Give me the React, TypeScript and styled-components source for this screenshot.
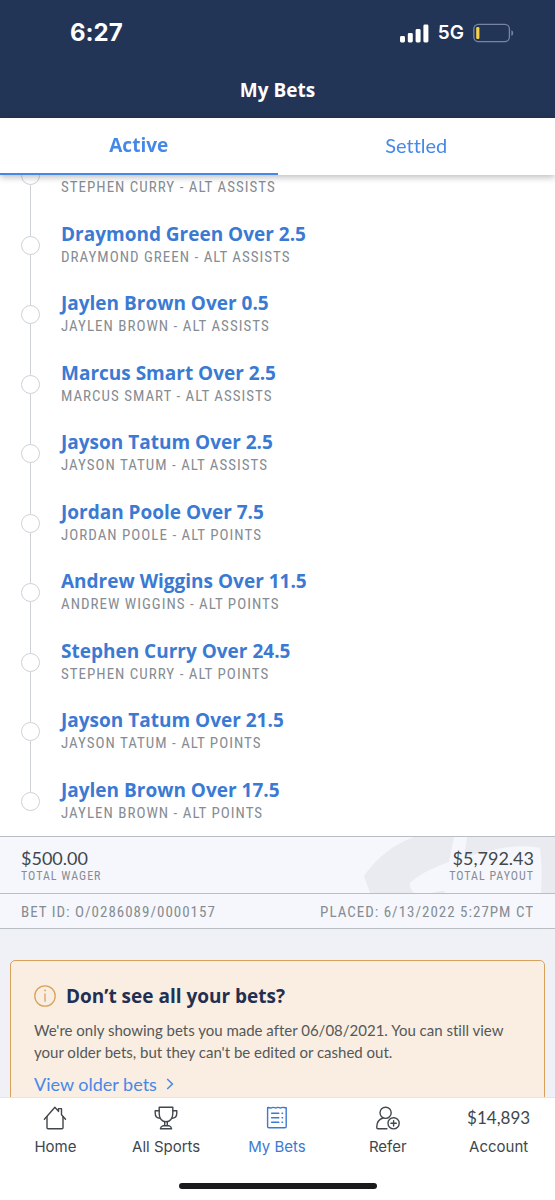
import React, { useLayoutEffect, useRef } from "react";
import styled, { createGlobalStyle } from "styled-components";

const sans = '"Lato", "Open Sans", sans-serif';
const heading = '"Open Sans", "Lato", sans-serif';
const narrow = '"Roboto Condensed", "Roboto", sans-serif';
const system = '"Inter", "Roboto", sans-serif';

const color = {
  navy: "#233556",
  blue: "#3b7ad3",
  bright: "#4688e8",
  ink: "#41474d",
  muted: "#868c93",
  line: "#ced2d6",
  rule: "#b9bec4",
  panel: "#f5f7fc",
  page: "#eff1f7",
  amber: "#d9a25c",
  cream: "#f9eee1",
};

const GlobalStyle = createGlobalStyle`
  *, *::before, *::after { box-sizing: border-box; }
  body { margin: 0; background: #fff; font-family: ${sans}; font-variant-ligatures: none; }
  button { font: inherit; border: 0; padding: 0; background: none; cursor: pointer; font-variant-ligatures: none; }
  h1, h2, h3, p, ul { margin: 0; padding: 0; }
`;

const Screen = styled.div`
  display: flex;
  flex-direction: column;
  height: 100vh;
  overflow: hidden;
`;

const Header = styled.header`
  flex: none;
  background: ${color.navy};
  color: #fff;
`;

const StatusBar = styled.div`
  display: flex;
  justify-content: space-between;
  align-items: center;
  padding: 18px 41px 0 70px;
  font-family: ${system};
  line-height: 30px;
`;

const Time = styled.span`
  font-size: 24px;
  font-weight: 700;
`;

const StatusIcons = styled.div`
  display: flex;
  align-items: center;
  gap: 9px;
  font-size: 19px;
  font-weight: 600;
`;

const PageTitle = styled.h1`
  padding: 28px 0 14px;
  text-align: center;
  font-family: ${heading};
  font-size: 19px;
  font-weight: 700;
  line-height: 28px;
`;

const Tabs = styled.div`
  position: relative;
  z-index: 1;
  flex: none;
  display: grid;
  grid-template-columns: 1fr 1fr;
  background: #fff;
  box-shadow: 0 2px 7px rgba(0, 0, 0, 0.28);
`;

const Tab = styled.button<{ $active?: boolean }>`
  && {
    height: 57px;
    padding-bottom: 2px;
    border-bottom: 2px solid ${(p) => (p.$active ? color.bright : "transparent")};
    color: ${color.bright};
    font-family: ${(p) => (p.$active ? heading : sans)};
    font-size: ${(p) => (p.$active ? 19 : 20)}px;
    font-weight: ${(p) => (p.$active ? 700 : 400)};
  }
`;

const Scroller = styled.main`
  flex: 1;
  min-height: 0;
  overflow-y: auto;
  scrollbar-width: none;
  background: ${color.page};
`;

const Legs = styled.ul`
  display: grid;
  grid-auto-rows: 1fr;
  min-height: 695px;
  list-style: none;
  background: #fff;
`;

const LegRow = styled.li`
  display: flex;
  gap: 21px;
  padding-left: 21px;
`;

const Track = styled.div`
  display: flex;
  flex-direction: column;
  align-items: center;
  width: 19px;
`;

const Connector = styled.span<{ $lead?: boolean; $hidden?: boolean }>`
  flex: ${(p) => (p.$lead ? "0 0 25px" : "1")};
  width: 1px;
  background: ${(p) => (p.$hidden ? "transparent" : color.line)};
`;

const Dot = styled.span`
  flex: none;
  width: 19px;
  height: 19px;
  border: 1px solid ${color.line};
  border-radius: 50%;
`;

const LegText = styled.div`
  padding-top: 10px;
`;

const LegTitle = styled.h2`
  min-height: 26px;
  color: ${color.blue};
  font-family: ${heading};
  font-size: 19px;
  font-weight: 700;
  line-height: 26px;
`;

const Caption = styled.p<{ $small?: boolean }>`
  color: ${color.muted};
  font-family: ${narrow};
  font-size: ${(p) => (p.$small ? 12 : 15)}px;
  letter-spacing: 1px;
  line-height: ${(p) => (p.$small ? 14 : 20)}px;
  text-transform: uppercase;
`;

const Summary = styled.section`
  position: relative;
  display: flex;
  justify-content: space-between;
  padding: 11px 21px 10px;
  border-top: 1px solid ${color.rule};
  background: ${color.panel};
`;

const Watermark = styled.svg`
  position: absolute;
  right: 0;
  top: 0;
  width: 191px;
  height: 56px;
`;

const Amount = styled.div<{ $end?: boolean }>`
  position: relative;
  text-align: ${(p) => (p.$end ? "right" : "left")};
`;

const AmountValue = styled.p`
  color: ${color.ink};
  font-size: 18px;
  line-height: 21px;
`;

const Meta = styled.section`
  display: flex;
  justify-content: space-between;
  padding: 8px 21px 6px;
  border-top: 1px solid ${color.rule};
  border-bottom: 1px solid ${color.rule};
  background: ${color.panel};
`;

const Notice = styled.section`
  margin: 31px 10px 24px;
  padding: 22px 23px;
  border: 1px solid ${color.amber};
  border-radius: 5px;
  background: ${color.cream};
`;

const NoticeHead = styled.div`
  display: flex;
  align-items: center;
  gap: 10px;
`;

const NoticeTitle = styled.h3`
  color: #222f52;
  font-family: ${heading};
  font-size: 19px;
  font-weight: 700;
  line-height: 26px;
`;

const NoticeText = styled.p`
  padding: 10px 0;
  color: #55585a;
  font-size: 15px;
  line-height: 22px;
`;

const NoticeLink = styled.a`
  display: inline-flex;
  align-items: center;
  gap: 9px;
  color: ${color.bright};
  font-size: 18px;
  line-height: 22px;
  text-decoration: none;
`;

const BottomNav = styled.nav`
  flex: none;
  border-top: 1px solid #e3e5e9;
  background: #fff;
`;

const NavItems = styled.div`
  display: grid;
  grid-template-columns: repeat(5, 1fr);
  padding: 8px 1px 0 0;
`;

const NavItem = styled.button<{ $active?: boolean }>`
  && {
    display: flex;
    flex-direction: column;
    align-items: center;
    gap: 6px;
    color: ${(p) => (p.$active ? color.blue : color.ink)};
    font-family: ${system};
    font-size: 15px;
    line-height: 22px;
  }
`;

const NavTop = styled.span`
  display: flex;
  align-items: center;
  height: 24px;
  font-family: ${sans};
  font-size: 17px;
`;

const HomeIndicator = styled.div`
  width: 198px;
  height: 6px;
  margin: 25px auto 11px;
  border-radius: 3px;
  background: #1a1a1c;
`;

const legs = [
  { title: "", caption: "Stephen Curry - Alt Assists" },
  { title: "Draymond Green Over 2.5", caption: "Draymond Green - Alt Assists" },
  { title: "Jaylen Brown Over 0.5", caption: "Jaylen Brown - Alt Assists" },
  { title: "Marcus Smart Over 2.5", caption: "Marcus Smart - Alt Assists" },
  { title: "Jayson Tatum Over 2.5", caption: "Jayson Tatum - Alt Assists" },
  { title: "Jordan Poole Over 7.5", caption: "Jordan Poole - Alt Points" },
  { title: "Andrew Wiggins Over 11.5", caption: "Andrew Wiggins - Alt Points" },
  { title: "Stephen Curry Over 24.5", caption: "Stephen Curry - Alt Points" },
  { title: "Jayson Tatum Over 21.5", caption: "Jayson Tatum - Alt Points" },
  { title: "Jaylen Brown Over 17.5", caption: "Jaylen Brown - Alt Points" },
];

const SignalIcon = () => (
  <svg width="29" height="19" viewBox="0 0 29 19" fill="#fff" aria-hidden="true">
    <rect x="0" y="12" width="5" height="6.5" rx="1.4" />
    <rect x="7.8" y="9" width="5" height="9.5" rx="1.4" />
    <rect x="15.6" y="5" width="5" height="13.5" rx="1.4" />
    <rect x="23.4" y="0.5" width="5" height="18" rx="1.4" />
  </svg>
);

const BatteryIcon = () => (
  <svg width="41" height="20" viewBox="0 0 41 20" fill="none" aria-hidden="true">
    <rect x="0.8" y="1.3" width="35.6" height="17.4" rx="4.6" stroke="#7885a0" strokeWidth="1.3" />
    <rect x="3.2" y="4" width="3.2" height="12" rx="1.2" fill="#f7d04a" />
    <path d="M38.4 7.2c2.4.8 2.4 4.8 0 5.6z" fill="#7885a0" />
  </svg>
);

const InfoIcon = () => (
  <svg width="22" height="22" viewBox="0 0 22 22" fill="none" stroke={color.amber} strokeWidth="1.3" aria-hidden="true">
    <circle cx="11" cy="11" r="10.2" />
    <path d="M11 8.6v8.2" />
    <circle cx="11" cy="5.4" r="0.9" fill={color.amber} stroke="none" />
  </svg>
);

const Chevron = () => (
  <svg width="8" height="12" viewBox="0 0 8 12" fill="none" stroke="currentColor" strokeWidth="1.5" aria-hidden="true">
    <path d="M1.2 1 6.4 6 1.2 11" />
  </svg>
);

const navSvg = {
  width: 24,
  height: 24,
  viewBox: "0 0 24 24",
  fill: "none",
  stroke: "currentColor",
  strokeWidth: 1.4,
  strokeLinecap: "round" as const,
  strokeLinejoin: "round" as const,
  "aria-hidden": true,
};

const HomeIcon = () => (
  <svg {...navSvg}>
    <path d="M1.4 13.2 11.9 1.2l3.6 4.2V2.6h3v6.2l4 4.4" />
    <path d="M4 10.6v11.2c0 .6.4 1 1 1h14c.6 0 1-.4 1-1V10.6" />
  </svg>
);

const TrophyIcon = () => (
  <svg {...navSvg}>
    <path d="M5.2 1.2h13.6v6.6c0 4.6-2.8 8-6.8 8s-6.8-3.4-6.8-8z" />
    <path d="M5.2 4.8H1.2V7c0 3 1.8 5.2 5 5.2M18.8 4.8h4V7c0 3-1.8 5.2-5 5.2" />
    <path d="M10.7 15.8v4M13.3 15.8v4M8.8 19.8h6.4c1.4.4 2.2 1.4 2.4 3H6.4c.2-1.6 1-2.6 2.4-3z" />
  </svg>
);

const SlipIcon = () => (
  <svg {...navSvg}>
    <path d="M2.6 1.6c1.5-.6 2.8 1.2 4.6 0 1.6-.9 3.1 1.2 4.7 0 1.6-.9 3.1 1.2 4.7 0 1.8-.9 3.1.6 4.6 0v18.8c0 .8-.5 1.3-1.3 1.3H3.9c-.8 0-1.3-.5-1.3-1.3z" />
    <path d="M6.6 7.3h7.2M6.6 11.8h7.2M6.6 16.3h7.2M17 7.3h.6M17 11.8h.6M17 16.3h.6" />
  </svg>
);

const ReferIcon = () => (
  <svg {...navSvg}>
    <circle cx="9.6" cy="6.8" r="5.6" />
    <path d="M6.8 12C3.2 13.4.8 16.6.8 20.6v1.1c0 .7.4 1.1 1.1 1.1h9" />
    <circle cx="17.6" cy="17.3" r="5.6" />
    <path d="M17.6 14.6v5.4M14.9 17.3h5.4" />
  </svg>
);

const navItems = [
  { label: "Home", top: <HomeIcon /> },
  { label: "All Sports", top: <TrophyIcon /> },
  { label: "My Bets", top: <SlipIcon />, active: true },
  { label: "Refer", top: <ReferIcon /> },
  { label: "Account", top: "$14,893" },
];

export default function App() {
  const scroller = useRef<HTMLElement>(null);

  useLayoutEffect(() => {
    if (scroller.current) scroller.current.scrollTop = 34;
  }, []);

  return (
    <Screen>
      <GlobalStyle />
      <Header>
        <StatusBar>
          <Time>6:27</Time>
          <StatusIcons>
            <SignalIcon />
            <span>5G</span>
            <BatteryIcon />
          </StatusIcons>
        </StatusBar>
        <PageTitle>My Bets</PageTitle>
      </Header>

      <Tabs role="tablist">
        <Tab role="tab" aria-selected="true" $active>
          Active
        </Tab>
        <Tab role="tab" aria-selected="false">
          Settled
        </Tab>
      </Tabs>

      <Scroller ref={scroller}>
        <Legs>
          {legs.map((leg, i) => (
            <LegRow key={leg.caption}>
              <Track>
                <Connector $lead />
                <Dot />
                <Connector $hidden={i === legs.length - 1} />
              </Track>
              <LegText>
                <LegTitle>{leg.title}</LegTitle>
                <Caption>{leg.caption}</Caption>
              </LegText>
            </LegRow>
          ))}
        </Legs>

        <Summary>
          <Watermark viewBox="0 0 191 56" fill="#e9ebf0" aria-hidden="true">
            <path d="M0 39C12 22 28 8 50 0h40l-5 25C68 31 54 38 46 46c-1 3 1 7 4 10H6z" />
            <path d="M103 0h88v56h-14c1-14 1-30-1-45-10-3-28-2-42 1-12 2-24 5-34 9z" />
            <path d="M69 56c5-2 9-2 13-2l-3 2z" />
          </Watermark>
          <Amount>
            <AmountValue>$500.00</AmountValue>
            <Caption $small>Total Wager</Caption>
          </Amount>
          <Amount $end>
            <AmountValue>$5,792.43</AmountValue>
            <Caption $small>Total Payout</Caption>
          </Amount>
        </Summary>

        <Meta>
          <Caption>Bet ID: O/0286089/0000157</Caption>
          <Caption>Placed: 6/13/2022 5:27PM CT</Caption>
        </Meta>

        <Notice>
          <NoticeHead>
            <InfoIcon />
            <NoticeTitle>Don’t see all your bets?</NoticeTitle>
          </NoticeHead>
          <NoticeText>
            We're only showing bets you made after 06/08/2021. You can still view your older bets, but they can't be
            edited or cashed out.
          </NoticeText>
          <NoticeLink href="#older-bets">
            View older bets
            <Chevron />
          </NoticeLink>
        </Notice>
      </Scroller>

      <BottomNav>
        <NavItems>
          {navItems.map((item) => (
            <NavItem key={item.label} $active={item.active}>
              <NavTop>{item.top}</NavTop>
              {item.label}
            </NavItem>
          ))}
        </NavItems>
        <HomeIndicator />
      </BottomNav>
    </Screen>
  );
}
